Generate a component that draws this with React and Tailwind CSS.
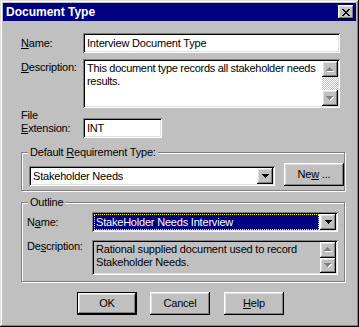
import React from 'react';

const raised = 'shadow-[inset_-1px_-1px_#000,inset_1px_1px_#fff,inset_-2px_-2px_#808080,inset_2px_2px_#dfdfdf]';
const sunken = 'shadow-[inset_1px_1px_#808080,inset_-1px_-1px_#fff,inset_2px_2px_#000,inset_-2px_-2px_#dfdfdf]';
const etched = 'border border-[#808080] shadow-[inset_1px_1px_#fff,1px_1px_#fff]';

const CloseGlyph = () => (
    <svg width="8" height="7" viewBox="0 0 8 7" shapeRendering="crispEdges">
        <path
            d="M0 0h2v1H0z M6 0h2v1H6z M1 1h2v1H1z M5 1h2v1H5z M2 2h4v1H2z M3 3h2v1H3z M2 4h4v1H2z M1 5h2v1H1z M5 5h2v1H5z M0 6h2v1H0z M6 6h2v1H6z"
            fill="#000"
        />
    </svg>
);

const DownGlyph = () => (
    <svg width="7" height="4" viewBox="0 0 7 4" shapeRendering="crispEdges">
        <path d="M0 0h7v1H0z M1 1h5v1H1z M2 2h3v1H2z M3 3h1v1H3z" fill="#000" />
    </svg>
);

// greyed out scroll arrow: grey glyph with a white copy one pixel lower right
const DisabledArrow = ({ up }) => {
    const d = up
        ? 'M3 0h1v1H3z M2 1h3v1H2z M1 2h5v1H1z M0 3h7v1H0z'
        : 'M0 0h7v1H0z M1 1h5v1H1z M2 2h3v1H2z M3 3h1v1H3z';
    return (
        <svg width="8" height="5" viewBox="0 0 8 5" shapeRendering="crispEdges">
            <path d={d} fill="#fff" transform="translate(1 1)" />
            <path d={d} fill="#808080" />
        </svg>
    );
};

const ScrollButton = ({ up, className = '' }) => (
    <div className={`w-[16px] bg-[#c0c0c0] ${raised} flex items-center justify-center ${className}`}>
        <DisabledArrow up={up} />
    </div>
);

const DropButton = () => (
    <div className={`w-[16px] h-full bg-[#c0c0c0] ${raised} flex items-center justify-center`}>
        <DownGlyph />
    </div>
);

const GroupBox = ({ label, className = '', children }) => (
    <div className={`relative w-[324px] ${etched} ${className}`}>
        <span className="absolute -top-[7px] left-[6px] px-[2px] bg-[#c0c0c0] whitespace-nowrap">{label}</span>
        {children}
    </div>
);

const PushButton = ({ children, isDefault = false, className = '' }) => (
    <div
        className={`w-[60px] h-[23px] bg-[#c0c0c0] flex items-center justify-center whitespace-pre ${raised} ${isDefault ? 'border border-black' : ''} ${className}`}
    >
        {children}
    </div>
);

export default function App() {
    return (
        <div className="w-[359px] h-[327px] bg-[#c0c0c0] p-[3px] shadow-[inset_-1px_-1px_#000,inset_1px_1px_#dfdfdf,inset_-2px_-2px_#808080,inset_2px_2px_#fff] font-['Liberation_Sans',Arial,sans-serif] text-[11px] leading-[13px] tracking-[-0.2px] text-black flex flex-col">
            <div className="h-[18px] shrink-0 bg-[#000080] flex items-center justify-between pl-[3px] pr-[2px]">
                <span className="text-white font-bold text-[12px] tracking-normal">Document Type</span>
                <div className={`w-[16px] h-[14px] bg-[#c0c0c0] ${raised} flex items-center justify-center`}>
                    <CloseGlyph />
                </div>
            </div>

            <div className="flex flex-col pl-[18px]">
                <div className="flex items-center mt-[12px]">
                    <span className="w-[62px]"><u>N</u>ame:</span>
                    <div className={`w-[257px] h-[20px] bg-white ${sunken} pl-[4px] flex items-center whitespace-nowrap`}>
                        Interview Document Type
                    </div>
                </div>

                <div className="flex items-start mt-[6px]">
                    <span className="w-[62px] pt-[2px]"><u>D</u>escription:</span>
                    <div className={`w-[257px] h-[49px] bg-white ${sunken} p-[2px] flex`}>
                        <div className="flex-1 pl-[2px] pt-[1px] whitespace-nowrap overflow-hidden tracking-[-0.3px]">
                            <div>This document type records all stakeholder needs</div>
                            <div>results.</div>
                        </div>
                        <div className="w-[16px] flex flex-col">
                            <ScrollButton up className="h-[16px]" />
                            <div className="flex-1 bg-[repeating-conic-gradient(#fff_0%_25%,#c0c0c0_0%_50%)] [background-size:2px_2px]" />
                            <ScrollButton className="h-[16px]" />
                        </div>
                    </div>
                </div>

                <div className="flex items-start">
                    <div className="w-[62px] pt-[1px]">
                        <div>File</div>
                        <div><u>E</u>xtension:</div>
                    </div>
                    <div className={`mt-[10px] w-[79px] h-[20px] bg-white ${sunken} pl-[4px] flex items-center`}>
                        INT
                    </div>
                </div>

                <GroupBox label={<>Default <u>R</u>equirement Type:</>} className="mt-[14px] h-[39px]">
                    <div className="flex items-end pl-[7px] pt-[10px]">
                        <div className={`w-[246px] h-[20px] bg-white ${sunken} p-[2px] flex`}>
                            <div className="flex-1 pl-[2px] flex items-center whitespace-nowrap">Stakeholder Needs</div>
                            <DropButton />
                        </div>
                        <PushButton className="ml-[9px] w-[53px] h-[22px]">
                            Ne<u>w</u> ...
                        </PushButton>
                    </div>
                </GroupBox>

                <GroupBox label="Outline" className="mt-[11px] h-[80px]">
                    <div className="flex flex-col pl-[5px] pt-[9px]">
                        <div className="flex items-center">
                            <span className="w-[65px]">N<u>a</u>me:</span>
                            <div className={`w-[246px] h-[20px] bg-white ${sunken} p-[2px] flex`}>
                                <div className="flex-1 pr-[1px] flex">
                                    <div className="flex-1 bg-[#000080] text-white border border-dotted border-[#ffff00] pl-[1px] flex items-center whitespace-nowrap">
                                        StakeHolder Needs Interview
                                    </div>
                                </div>
                                <DropButton />
                            </div>
                        </div>
                        <div className="flex items-start mt-[8px]">
                            <span className="w-[65px]">De<u>s</u>cription:</span>
                            <div className={`w-[246px] h-[35px] bg-[#c0c0c0] ${sunken} p-[2px] flex`}>
                                <div className="flex-1 pl-[2px] pt-[1px] whitespace-nowrap overflow-hidden">
                                    <div>Rational supplied document used to record</div>
                                    <div>Stakeholder Needs.</div>
                                </div>
                                <div className="w-[16px] flex flex-col">
                                    <ScrollButton up className="flex-1" />
                                    <ScrollButton className="flex-1" />
                                </div>
                            </div>
                        </div>
                    </div>
                </GroupBox>
            </div>

            <div className="flex mt-[10px] pl-[74px]">
                <PushButton isDefault>OK</PushButton>
                <PushButton className="ml-[13px]">Cancel</PushButton>
                <PushButton className="ml-[14px]"><u>H</u>elp</PushButton>
            </div>
        </div>
    );
}
